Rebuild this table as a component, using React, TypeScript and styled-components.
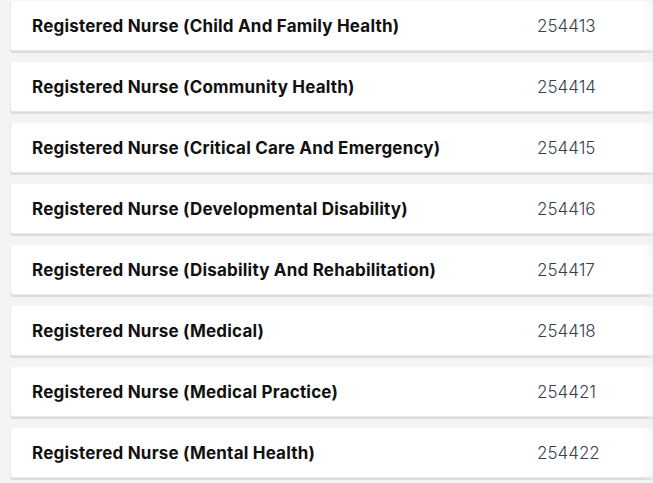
import styled, { createGlobalStyle } from 'styled-components';

const GlobalStyle = createGlobalStyle`
  html, body {
    margin: 0;
    padding: 0;
    background: #f4f4f4;
    overflow: hidden;
  }
  body {
    font-family: Inter, "Noto Sans", sans-serif;
  }
`;

const occupations = [
  { name: 'Registered Nurse (Child And Family Health)', code: '254413' },
  { name: 'Registered Nurse (Community Health)', code: '254414' },
  { name: 'Registered Nurse (Critical Care And Emergency)', code: '254415' },
  { name: 'Registered Nurse (Developmental Disability)', code: '254416' },
  { name: 'Registered Nurse (Disability And Rehabilitation)', code: '254417' },
  { name: 'Registered Nurse (Medical)', code: '254418' },
  { name: 'Registered Nurse (Medical Practice)', code: '254421' },
  { name: 'Registered Nurse (Mental Health)', code: '254422' },
];

const Page = styled.div`
  position: relative;
  height: 483px;
  overflow: hidden;
`;

const List = styled.div`
  display: flex;
  flex-direction: column;
  gap: 11px;
  padding: 1px 0 0 10px;
  width: 700px;
`;

const Card = styled.div`
  display: grid;
  grid-template-columns: 505px 1fr;
  align-items: center;
  height: 48px;
  padding: 0 21px;
  background: #fff;
  border: 1px solid #e8e8e8;
  border-top-color: #fff;
  border-radius: 3px;
  box-shadow: 0 2px 0 #dcdcdc;
`;

const Name = styled.span`
  font-size: 17px;
  font-weight: 700;
  letter-spacing: 0.2px;
  color: #111;
`;

const Code = styled.span`
  font-size: 17px;
  font-weight: 300;
  color: #37404f;
`;

const EdgeFade = styled.div`
  position: absolute;
  top: 0;
  right: 0;
  width: 10px;
  height: 100%;
  background: linear-gradient(to right, rgba(255, 255, 255, 0), rgba(240, 240, 240, 0.6));
  pointer-events: none;
`;

export default function App(): JSX.Element {
  return (
    <Page>
      <GlobalStyle />
      <List>
        {occupations.map((o) => (
          <Card key={o.code}>
            <Name>{o.name}</Name>
            <Code>{o.code}</Code>
          </Card>
        ))}
      </List>
      <EdgeFade />
    </Page>
  );
}
